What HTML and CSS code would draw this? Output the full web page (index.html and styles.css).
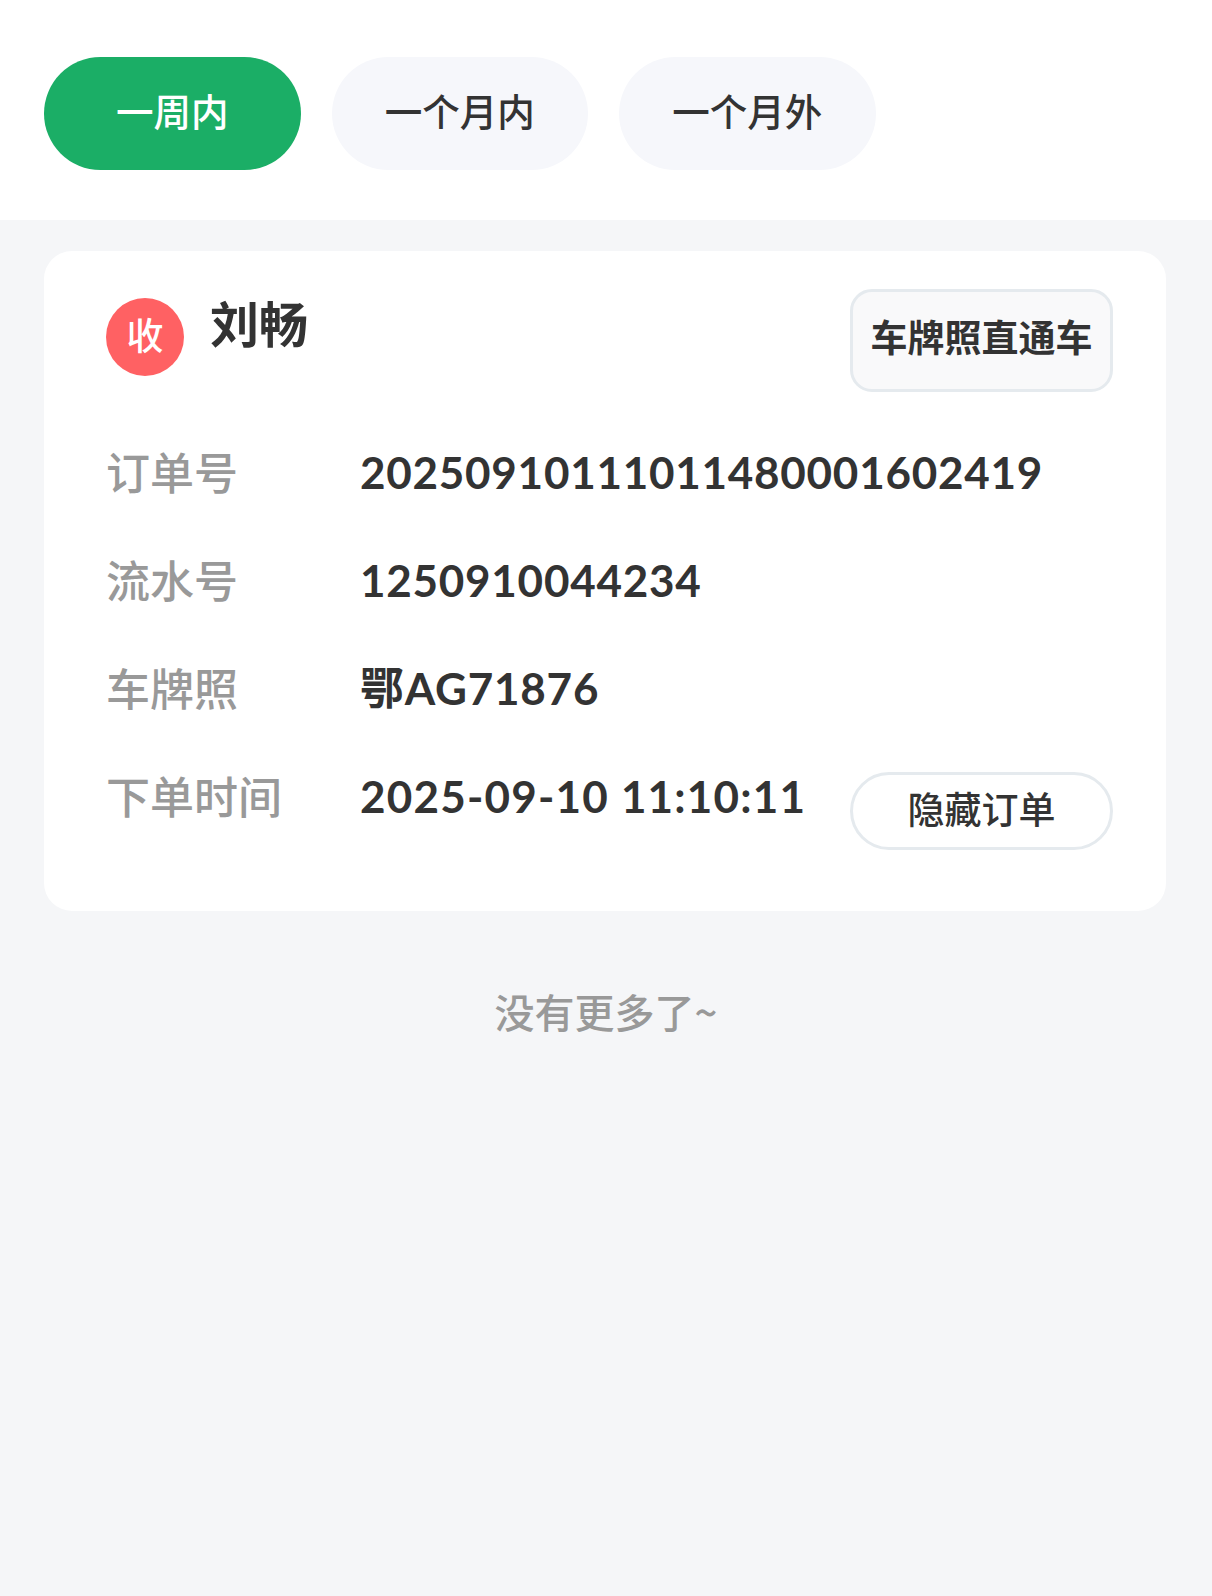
FILE: index.html
```html
<!DOCTYPE html>
<html lang="zh-CN">
<head>
    <meta charset="UTF-8">
    <meta name="viewport" content="width=device-width, initial-scale=1.0">
    <title>订单列表</title>
    <link rel="stylesheet" href="styles.css">
</head>
<body>
    <div class="tabs">
        <div class="tab active">一周内</div>
        <div class="tab">一个月内</div>
        <div class="tab">一个月外</div>
    </div>
    <div class="order-card">
        <div class="card-header">
            <div class="customer">
                <span class="avatar">收</span>
                <span class="customer-name">刘畅</span>
            </div>
            <div class="plate-btn">车牌照直通车</div>
        </div>
        <div class="info-row">
            <span class="info-label">订单号</span>
            <span class="info-value">20250910111011480001602419</span>
        </div>
        <div class="info-row">
            <span class="info-label">流水号</span>
            <span class="info-value">1250910044234</span>
        </div>
        <div class="info-row">
            <span class="info-label">车牌照</span>
            <span class="info-value">鄂AG71876</span>
        </div>
        <div class="info-row">
            <span class="info-label">下单时间</span>
            <span class="info-value info-time">2025-09-10 11:10:11</span>
            <div class="hide-btn">隐藏订单</div>
        </div>
    </div>
    <div class="no-more">没有更多了~</div>
</body>
</html>
```

FILE: styles.css
```css
body {
    font-family: 'Noto Sans CJK SC', 'Noto Sans', sans-serif;
    background-color: #f5f6f8;
    color: #333;
    margin: 0;
    height: 1596px;
    overflow: hidden;
}
.tabs {
    background: white;
    display: flex;
    gap: 31px;
    padding: 57px 44px 50px;
}
.tab {
    width: 256.5px;
    height: 113px;
    line-height: 106px;
    border-radius: 57px;
    background: #f6f7fb;
    text-align: center;
    font-size: 37.5px;
    font-weight: 500;
}
.tab.active {
    background: #1bae66;
    color: white;
}
.order-card {
    background: white;
    margin: 31px 46px 0 44px;
    padding: 38px 53px 61px 62px;
    border-radius: 28px;
}
.card-header {
    display: flex;
    justify-content: space-between;
    margin-bottom: 51px;
}
.customer {
    display: flex;
    align-items: flex-start;
    gap: 26px;
    padding-top: 9px;
}
.avatar {
    width: 78px;
    height: 78px;
    line-height: 72px;
    border-radius: 50%;
    background: #ff6163;
    color: white;
    text-align: center;
    font-size: 37px;
    font-weight: 500;
}
.customer-name {
    font-size: 49px;
    font-weight: bold;
    line-height: 48px;
}
.plate-btn {
    box-sizing: border-box;
    width: 263px;
    height: 103px;
    line-height: 89px;
    border: 3px solid #e5eaee;
    border-radius: 22px;
    background: #f9f9fa;
    text-align: center;
    font-size: 37px;
    font-weight: bold;
}
.info-row {
    display: flex;
    align-items: flex-start;
    line-height: 58px;
    margin-bottom: 50px;
    font-size: 44px;
}
.info-row:last-child {
    margin-bottom: 0;
}
.info-label {
    width: 254px;
    flex-shrink: 0;
    line-height: 56px;
    color: #999;
    font-weight: 500;
}
.info-value {
    font-family: 'Lato', 'Noto Sans CJK SC', sans-serif;
    font-weight: bold;
    letter-spacing: 0.75px;
    flex-grow: 1;
}
.info-time {
    letter-spacing: 1.2px;
}
.hide-btn {
    box-sizing: border-box;
    width: 263px;
    height: 78px;
    line-height: 66px;
    margin-top: 5px;
    border: 3px solid #e5eaee;
    border-radius: 39px;
    text-align: center;
    font-size: 37px;
    font-weight: 500;
}
.no-more {
    margin-top: 70px;
    text-align: center;
    font-size: 40px;
    line-height: 60px;
    color: #999;
    font-weight: 500;
}
```
